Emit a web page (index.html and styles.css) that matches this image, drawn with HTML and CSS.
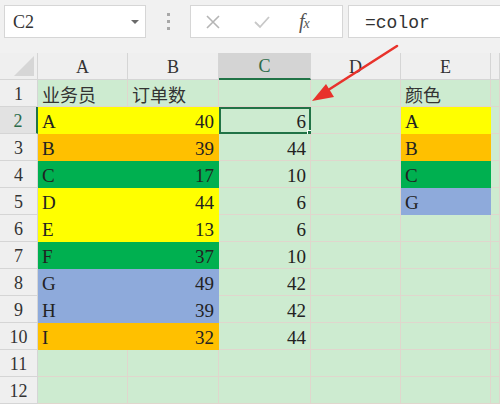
FILE: index.html
```html
<!DOCTYPE html>
<html>
<head>
<meta charset="utf-8">
<link rel="stylesheet" href="styles.css">
</head>
<body>
<div class="app">
  <div class="toolbar">
    <div class="namebox"><span class="nb-text">C2</span><span class="caret"></span></div>
    <div class="dots"><i></i><i></i><i></i></div>
    <div class="fxbox">
      <svg class="ic ic-x" width="16" height="16" viewBox="0 0 16 16"><path d="M2 2 L14 14 M14 2 L2 14" stroke="#b5b5b5" stroke-width="1.6" fill="none"/></svg>
      <svg class="ic ic-ok" width="18" height="16" viewBox="0 0 18 16"><path d="M2 8 L7 13 L16 3" stroke="#c8c8c8" stroke-width="1.8" fill="none"/></svg>
      <span class="fx"><i>f</i><i class="xx">x</i></span>
    </div>
    <div class="formula">=color</div>
  </div>
  <div class="sheet">
    <div class="hd corner"><span class="tri"></span></div>
    <div class="hd col">A</div>
    <div class="hd col">B</div>
    <div class="hd col sel">C</div>
    <div class="hd col">D</div>
    <div class="hd col">E</div>
    <div class="hd col"></div>

    <div class="hd row">1</div>
    <div class="c cjk">业务员</div>
    <div class="c cjk">订单数</div>
    <div class="c"></div>
    <div class="c"></div>
    <div class="c cjk">颜色</div>
    <div class="c"></div>

    <div class="hd row rsel">2</div>
    <div class="c y">A</div>
    <div class="c y n">40</div>
    <div class="c n active">6<span class="handle"></span></div>
    <div class="c"></div>
    <div class="c y">A</div>
    <div class="c"></div>

    <div class="hd row">3</div>
    <div class="c o">B</div>
    <div class="c o n">39</div>
    <div class="c n">44</div>
    <div class="c"></div>
    <div class="c o">B</div>
    <div class="c"></div>

    <div class="hd row">4</div>
    <div class="c g">C</div>
    <div class="c g n">17</div>
    <div class="c n">10</div>
    <div class="c"></div>
    <div class="c g">C</div>
    <div class="c"></div>

    <div class="hd row">5</div>
    <div class="c y">D</div>
    <div class="c y n">44</div>
    <div class="c n">6</div>
    <div class="c"></div>
    <div class="c b">G</div>
    <div class="c"></div>

    <div class="hd row">6</div>
    <div class="c y">E</div>
    <div class="c y n">13</div>
    <div class="c n">6</div>
    <div class="c"></div>
    <div class="c"></div>
    <div class="c"></div>

    <div class="hd row">7</div>
    <div class="c g">F</div>
    <div class="c g n">37</div>
    <div class="c n">10</div>
    <div class="c"></div>
    <div class="c"></div>
    <div class="c"></div>

    <div class="hd row">8</div>
    <div class="c b">G</div>
    <div class="c b n">49</div>
    <div class="c n">42</div>
    <div class="c"></div>
    <div class="c"></div>
    <div class="c"></div>

    <div class="hd row">9</div>
    <div class="c b">H</div>
    <div class="c b n">39</div>
    <div class="c n">42</div>
    <div class="c"></div>
    <div class="c"></div>
    <div class="c"></div>

    <div class="hd row">10</div>
    <div class="c o">I</div>
    <div class="c o n">32</div>
    <div class="c n">44</div>
    <div class="c"></div>
    <div class="c"></div>
    <div class="c"></div>

    <div class="hd row">11</div>
    <div class="c"></div>
    <div class="c"></div>
    <div class="c"></div>
    <div class="c"></div>
    <div class="c"></div>
    <div class="c"></div>

    <div class="hd row">12</div>
    <div class="c"></div>
    <div class="c"></div>
    <div class="c"></div>
    <div class="c"></div>
    <div class="c"></div>
    <div class="c"></div>
  </div>
  <svg class="arrow" width="500" height="405" viewBox="0 0 500 405">
    <line x1="397" y1="46" x2="322" y2="94" stroke="#e8322b" stroke-width="2.6" stroke-linecap="round"/>
    <polygon points="312,101 326,84 334,97" fill="#e8322b"/>
  </svg>
</div>
</body>
</html>
```
FILE: styles.css
```css
* { box-sizing: border-box; }
html, body { margin: 0; padding: 0; }
body {
  width: 500px;
  height: 405px;
  overflow: hidden;
  background: #ffffff;
  font-family: "Liberation Serif", "Times New Roman", serif;
}
.app { position: relative; width: 500px; height: 405px; overflow: hidden; }

.toolbar {
  height: 53px;
  background: #f1f1f1;
  display: flex;
  align-items: flex-start;
  padding: 5px 0 0 4px;
}
.namebox {
  width: 142px;
  height: 33px;
  background: #fff;
  border: 1px solid #d6d6d6;
  display: flex;
  align-items: center;
  padding: 0 0 0 8px;
  position: relative;
}
.nb-text { font-family: "Liberation Serif", serif; font-size: 18px; color: #333; flex: 1; padding-top: 2px; }
.caret {
  width: 0; height: 0;
  border-left: 4px solid transparent;
  border-right: 4px solid transparent;
  border-top: 4px solid #6a6a6a;
  margin-right: 6px;
}
.dots {
  width: 44px;
  height: 33px;
  display: flex;
  flex-direction: column;
  align-items: center;
  justify-content: center;
  gap: 4px;
}
.dots i { display: block; width: 3px; height: 3px; background: #a8a8a8; }
.fxbox {
  width: 153px;
  height: 33px;
  background: #fff;
  border: 1px solid #d6d6d6;
  display: flex;
  align-items: center;
  padding-left: 14px;
}
.ic-x { margin-right: 32px; }
.ic-ok { margin-right: 28px; }
.fx {
  font-family: "Liberation Serif", serif;
  font-size: 20px;
  color: #555;
  font-style: italic;
}
.fx i { font-style: italic; }
.fx .xx { font-size: 14px; margin-left: -1px; }
.formula {
  margin-left: 5px;
  flex: 1;
  height: 33px;
  background: #fff;
  border: 1px solid #d6d6d6;
  border-right: none;
  display: flex;
  align-items: center;
  padding-left: 16px;
  padding-top: 2px;
  font-family: "Liberation Mono", "Courier New", monospace;
  font-size: 18px;
  color: #333;
}

.sheet {
  display: grid;
  grid-template-columns: 38px 90px 91px 92px 90px 90px 1fr;
  grid-auto-rows: 27px;
  background: #cdebd0;
}
.hd {
  background: #efefef;
  border-right: 1px solid #d5d5d5;
  border-bottom: 1px solid #d5d5d5;
  display: flex;
  align-items: center;
  justify-content: center;
  color: #333;
  font-family: "Liberation Serif", serif;
  font-size: 18px;
  padding-top: 2px;
}
.corner { position: relative; }
.tri {
  position: absolute;
  right: 3px;
  bottom: 3px;
  width: 0; height: 0;
  border-left: 20px solid transparent;
  border-bottom: 20px solid #d6d6d6;
}
.col.sel {
  background: #d4d4d4;
  color: #2b6b4a;
  border-bottom: 2px solid #217346;
}
.row.rsel {
  background: #e2e2e2;
  color: #2b6b4a;
  border-right: 2px solid #217346;
}
.c {
  background: #cdebd0;
  border-right: 1px solid #e0d6cd;
  border-bottom: 1px solid #e0d6cd;
  display: flex;
  align-items: center;
  padding: 3px 4px 0 4px;
  font-family: "Liberation Serif", serif;
  font-size: 19px;
  color: #222;
  position: relative;
}
.c.cjk { font-family: "Noto Sans CJK SC", sans-serif; font-size: 18px; color: #333; padding-top: 1px; }
.c.n { justify-content: flex-end; }
.c.y { background: #ffff00; border-color: #ffff00; }
.c.o { background: #ffc000; border-color: #ffc000; }
.c.g { background: #00b050; border-color: #00b050; }
.c.b { background: #8eaadb; border-color: #8eaadb; }
.c.active {
  border: 2px solid #217346;
  padding-right: 3px;
}
.handle {
  position: absolute;
  right: -4px;
  bottom: -4px;
  width: 6px;
  height: 6px;
  background: #217346;
  border: 1px solid #fff;
}
.arrow { position: absolute; left: 0; top: 0; pointer-events: none; }
```
